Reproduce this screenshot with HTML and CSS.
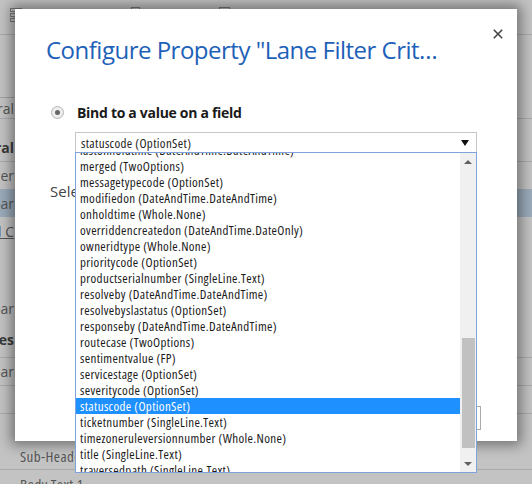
FILE: index.html
```html
<!DOCTYPE html>
<html>
<head>
<meta charset="utf-8">
<link rel="stylesheet" href="styles.css">
</head>
<body>
<div class="page">
  <div class="toolbar">
    <svg class="tb-icon1" width="12" height="15" viewBox="0 0 12 15"><rect x="0.5" y="1.5" width="11" height="3" fill="none" stroke="#7a7a7a"/><rect x="0.5" y="6.5" width="11" height="3" fill="none" stroke="#7a7a7a"/><rect x="0.5" y="11.5" width="11" height="3" fill="none" stroke="#7a7a7a"/></svg>
    <span class="tb-sep sep1"></span>
    <svg class="tb-icon2" width="9" height="12" viewBox="0 0 9 12"><rect x="0.5" y="0.5" width="8" height="11" fill="none" stroke="#7a7a7a"/></svg>
    <span class="tb-sep sep2"></span>
    <svg class="tb-icon3" width="11" height="12" viewBox="0 0 11 12"><rect x="0.5" y="0.5" width="10" height="11" fill="none" stroke="#7a7a7a"/></svg>
  </div>
  <div class="r sp62"></div>
  <div class="r h22 line"><span class="lab tab">General</span></div>
  <div class="r h43 line bottomish"><span class="lab bold">Central</span></div>
  <div class="r h27"><span class="lab">Header</span></div>
  <div class="r h28 band"><span class="lab">Lanbar</span></div>
  <div class="r h28"><span class="lab link">Add C</span></div>
  <div class="r sp50"></div>
  <div class="r h26"><span class="lab">Lanbar</span></div>
  <div class="r h37 line"><span class="lab bold">Properties</span></div>
  <div class="r h28 line"><span class="lab">Lanbar</span></div>
  <div class="r h28 line"></div>
  <div class="r h28"></div>
  <div class="r h28 line"><span class="full">Sub-Header</span></div>
  <div class="r h28"><span class="full">Body Text 1</span></div>
</div>

<div class="dialog">
  <div class="dlg-head">
    <div class="title">Configure Property "Lane Filter Crit…</div>
    <svg class="close" width="10" height="10" viewBox="0 0 10 10"><path d="M0.8 0.8 L9.2 9.2 M9.2 0.8 L0.8 9.2" stroke="#444" stroke-width="1.6" fill="none"/></svg>
  </div>
  <div class="dlg-body">
    <div class="opt-row">
      <span class="radio"><span class="dot"></span></span>
      <span class="opt-label">Bind to a value on a field</span>
    </div>
    <div class="field">
      <div class="select">
        <span>statuscode (OptionSet)</span>
        <span class="caret"></span>
      </div>
      <div class="list">
        <div class="items">
          <div class="items-inner">
            <div class="item">lastonholdtime (DateAndTime.DateAndTime)</div>
            <div class="item">merged (TwoOptions)</div>
            <div class="item">messagetypecode (OptionSet)</div>
            <div class="item">modifiedon (DateAndTime.DateAndTime)</div>
            <div class="item">onholdtime (Whole.None)</div>
            <div class="item">overriddencreatedon (DateAndTime.DateOnly)</div>
            <div class="item">owneridtype (Whole.None)</div>
            <div class="item">prioritycode (OptionSet)</div>
            <div class="item">productserialnumber (SingleLine.Text)</div>
            <div class="item">resolveby (DateAndTime.DateAndTime)</div>
            <div class="item">resolvebyslastatus (OptionSet)</div>
            <div class="item">responseby (DateAndTime.DateAndTime)</div>
            <div class="item">routecase (TwoOptions)</div>
            <div class="item">sentimentvalue (FP)</div>
            <div class="item">servicestage (OptionSet)</div>
            <div class="item">severitycode (OptionSet)</div>
            <div class="item sel">statuscode (OptionSet)</div>
            <div class="item">ticketnumber (SingleLine.Text)</div>
            <div class="item">timezoneruleversionnumber (Whole.None)</div>
            <div class="item">title (SingleLine.Text)</div>
            <div class="item">traversedpath (SingleLine.Text)</div>
          </div>
        </div>
        <div class="sb">
          <div class="sb-btn"><span class="arr-up"></span></div>
          <div class="sb-track"><div class="thumb"></div></div>
          <div class="sb-btn"><span class="arr-down"></span></div>
        </div>
      </div>
    </div>
    <div class="sel-label">Select the value to use</div>
  </div>
  <div class="dlg-foot">
    <button class="btn">OK</button>
    <button class="btn">Cancel</button>
  </div>
</div>
</body>
</html>
```
FILE: styles.css
```css
* { box-sizing: border-box; }
html, body { margin: 0; padding: 0; }
body {
  width: 532px;
  height: 484px;
  overflow: hidden;
  background: #c3c3c3;
  font-family: "Open Sans", "Noto Sans", sans-serif;
  position: relative;
}

/* background page */
.page { display: flex; flex-direction: column; width: 532px; }
.toolbar {
  height: 35px;
  border-bottom: 1px solid #a9a9a9;
  display: flex;
  align-items: flex-start;
  padding: 7px 0 0 10px;
}
.tb-sep { width: 1px; height: 10px; background: #8a8a8a; }
.sep1 { margin-left: 98px; margin-top: 2px; }
.tb-icon2 { margin-left: 10px; }
.sep2 { margin-left: 64px; margin-top: 2px; }
.tb-icon3 { margin-left: 14px; }

.r { display: flex; align-items: center; flex: none; font-size: 14px; color: #555; }
.r.line { border-bottom: 1px solid #aaaaaa; }
.sp62 { height: 62px; }
.sp50 { height: 50px; }
.h22 { height: 22px; }
.h26 { height: 26px; }
.h27 { height: 27px; }
.h28 { height: 28px; }
.h37 { height: 37px; }
.h43 { height: 43px; }
.bottomish { align-items: flex-end; padding-bottom: 4px; }
.band { background: #9babba; }
.lab {
  width: 14px;
  overflow: hidden;
  display: flex;
  justify-content: flex-end;
  white-space: nowrap;
  flex: none;
}
.lab.tab { border-top: 1px solid #a0a0a0; height: 22px; align-items: center; }
.lab.bold { font-weight: 700; color: #3a3a3a; }
.lab.link { text-decoration: underline; }
.full {
  padding-left: 20px;
  white-space: nowrap;
  font-size: 15px;
  font-stretch: 75%;
  letter-spacing: 0.4px;
}

/* dialog */
.dialog {
  position: absolute;
  left: 15px;
  top: 9px;
  width: 502px;
  height: 432px;
  background: #fff;
  box-shadow: 0 0 12px 4px rgba(0, 0, 0, 0.42);
  display: flex;
  flex-direction: column;
}
.dlg-head {
  display: flex;
  align-items: flex-start;
  padding: 16px 14px 0 31px;
}
.title {
  flex: 1;
  font-size: 24px;
  letter-spacing: -0.5px;
  line-height: 34px;
  padding-top: 8px;
  color: #1e61b8;
  white-space: nowrap;
}
.close { margin-top: 4px; }

.dlg-body { padding: 0 0 0 36px; display: flex; flex-direction: column; }
.opt-row {
  display: flex;
  align-items: center;
  gap: 13px;
  margin-top: 35px;
  height: 20px;
}
.radio {
  width: 13px;
  height: 13px;
  border-radius: 50%;
  border: 1px solid #b4b4b4;
  background: #ededed;
  display: flex;
  align-items: center;
  justify-content: center;
}
.dot { width: 5px; height: 5px; border-radius: 50%; background: #666; }
.opt-label { font-size: 14px; letter-spacing: -0.3px; font-weight: 700; color: #1a1a1a; }

.field { position: relative; margin: 10px 0 0 24px; width: 402px; }
.select {
  height: 21px;
  border: 1px solid #c6c6c6;
  display: flex;
  align-items: center;
  justify-content: space-between;
  padding: 0 7px 0 5px;
  font-size: 13px;
  font-stretch: 75%;
  letter-spacing: 0.35px;
  color: #222;
}
.caret {
  width: 0; height: 0;
  border-left: 4px solid transparent;
  border-right: 4px solid transparent;
  border-top: 6px solid #111;
}
.list {
  position: absolute;
  top: 20px;
  left: 0;
  width: 402px;
  height: 321px;
  border: 1px solid #7fa2dc;
  background: #fff;
  display: flex;
  z-index: 2;
}
.items { flex: 1; overflow: hidden; }
.items-inner { margin-top: -11px; }
.item {
  height: 16px;
  line-height: 16px;
  padding-left: 4px;
  font-size: 13px;
  font-stretch: 75%;
  letter-spacing: 0.35px;
  color: #1a1a1a;
  white-space: nowrap;
}
.item.sel { background: #1e90ff; color: #fff; }
.sb { width: 16px; background: #f0f0f0; display: flex; flex-direction: column; }
.sb-btn { height: 17px; display: flex; align-items: center; justify-content: center; }
.arr-up {
  width: 0; height: 0;
  border-left: 4px solid transparent;
  border-right: 4px solid transparent;
  border-bottom: 4px solid #606060;
}
.arr-down {
  width: 0; height: 0;
  border-left: 4px solid transparent;
  border-right: 4px solid transparent;
  border-top: 4px solid #606060;
}
.sb-track { flex: 1; display: flex; flex-direction: column; }
.thumb { margin: 168px 1px 0 2px; height: 110px; background: #c1c1c1; }

.sel-label { margin-top: 28px; margin-left: -1px; font-size: 15px; color: #444; }

.dlg-foot {
  margin-top: auto;
  display: flex;
  justify-content: flex-end;
  gap: 8px;
  padding: 0 36px 11px 0;
}
.btn {
  height: 24px;
  width: 80px;
  border: 1px solid #ababab;
  background: #fff;
  font-family: inherit;
  font-size: 12px;
}
```
